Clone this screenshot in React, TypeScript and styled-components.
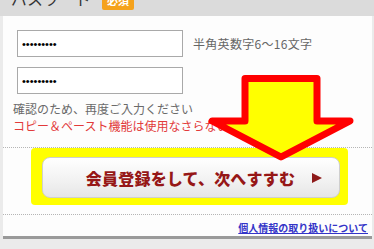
import React from "react";
import styled, { createGlobalStyle } from "styled-components";

const Global = createGlobalStyle`
  html, body { margin: 0; padding: 0; background: #ebebeb; }
  body { font-family: "Noto Sans CJK JP", "Liberation Sans", sans-serif; overflow: hidden; }
`;

const Page = styled.div`
  position: relative;
  width: 374px;
  height: 249px;
  overflow: hidden;
  background: #ebebeb;
`;

const Header = styled.div`
  height: 16px;
  overflow: hidden;
  background: #dbdbdb;
`;

const HeaderInner = styled.div`
  display: flex;
  align-items: flex-end;
  gap: 11px;
  margin-top: -10px;
  padding-left: 11px;
`;

const Title = styled.span`
  font-size: 16px;
  line-height: 16px;
  color: #333;
`;

const Badge = styled.span`
  display: inline-block;
  margin-bottom: -4px;
  padding: 0 5px;
  height: 20px;
  line-height: 20px;
  font-size: 11px;
  font-weight: bold;
  color: #fff;
  background: #f5a21c;
  border-radius: 2px;
`;

const Panel = styled.div`
  margin: 0 2px 0 3px;
  background: #fdfdfd;
  border-bottom: 3px solid #9a9a9a;
  display: flex;
  flex-direction: column;
`;

const FieldRow = styled.div<{ $top: number }>`
  display: flex;
  align-items: center;
  gap: 10px;
  margin-top: ${(p) => p.$top}px;
  padding-left: 14px;
`;

const PassInput = styled.input`
  box-sizing: border-box;
  width: 166px;
  height: 27px;
  margin: 0;
  padding: 0 4px;
  border: 1px solid #a9a9a9;
  border-radius: 0;
  background: #fff;
  font-family: "Liberation Sans", sans-serif;
  font-size: 11px;
  color: #000;
  outline: none;
`;

const Hint = styled.span`
  font-size: 12px;
  line-height: 16px;
  color: #666;
  letter-spacing: 0.3px;
`;

const Notes = styled.div`
  margin-top: 6px;
  padding-left: 10px;
  display: flex;
  flex-direction: column;
`;

const Note = styled.div<{ $red?: boolean }>`
  font-size: 12px;
  line-height: 17px;
  color: ${(p) => (p.$red ? "#e23a3a" : "#6a6a6a")};
  white-space: nowrap;
  letter-spacing: 0px;
`;

const Divider = styled.div<{ $top: number }>`
  margin-top: ${(p) => p.$top}px;
  border-top: 1px dotted #b5b5b5;
`;

const Highlight = styled.div`
  align-self: flex-start;
  margin-left: 28px;
  width: 317px;
  box-sizing: border-box;
  padding: 9px 8px 7px 11px;
  background: #ffff00;
  border-radius: 4px;
`;

const SubmitButton = styled.button`
  box-sizing: border-box;
  width: 298px;
  height: 41px;
  margin: 0;
  padding: 0 17px 0 0;
  display: grid;
  grid-template-columns: 1fr auto 1fr;
  align-items: center;
  border: 1px solid #cfcfcf;
  border-radius: 8px;
  background: linear-gradient(#ffffff, #f1f1f1 60%, #e6e6e6);
  box-shadow: inset 0 1px 0 #fff;
  cursor: pointer;
`;

const ButtonLabel = styled.span`
  grid-column: 2;
  font-family: "Noto Sans CJK JP", sans-serif;
  font-size: 16px;
  font-weight: 900;
  line-height: 20px;
  letter-spacing: 0.2px;
  color: #961717;
  margin-left: 16px;
`;

const ButtonArrow = styled.span`
  grid-column: 3;
  justify-self: end;
  width: 0;
  height: 0;
  border-top: 5px solid transparent;
  border-bottom: 5px solid transparent;
  border-left: 10px solid #8e1a1a;
`;

const LinkRow = styled.div`
  display: flex;
  justify-content: flex-end;
  margin-top: 6px;
  padding-right: 4px;
  height: 14px;
`;

const PolicyLink = styled.a`
  font-size: 10px;
  line-height: 14px;
  font-weight: bold;
  color: #3434c8;
  text-decoration: underline;
`;

const ArrowOverlay = styled.svg`
  position: absolute;
  left: 0;
  top: 0;
  pointer-events: none;
`;

export default function App() {
  return (
    <>
      <Global />
      <Page>
        <Header>
          <HeaderInner>
            <Title>パスワード</Title>
            <Badge>必須</Badge>
          </HeaderInner>
        </Header>
        <Panel>
          <FieldRow $top={14}>
            <PassInput type="password" defaultValue="abcdefghi" readOnly />
            <Hint>半角英数字6〜16文字</Hint>
          </FieldRow>
          <FieldRow $top={10}>
            <PassInput type="password" defaultValue="abcdefghi" readOnly />
          </FieldRow>
          <Notes>
            <Note>確認のため、再度ご入力ください</Note>
            <Note $red>コピー＆ペースト機能は使用なさらないでください</Note>
          </Notes>
          <Divider $top={13} />
          <Highlight>
            <SubmitButton type="button">
              <ButtonLabel>会員登録をして、次へすすむ</ButtonLabel>
              <ButtonArrow />
            </SubmitButton>
          </Highlight>
          <Divider $top={9} />
          <LinkRow>
            <PolicyLink href="#">個人情報の取り扱いについて</PolicyLink>
          </LinkRow>
          <div style={{ height: 1 }} />
        </Panel>
        <ArrowOverlay width="374" height="249" viewBox="0 0 374 249">
          <polygon
            points="245,78.5 317,78.5 317,121 350,121 281,157 212,121 245,121"
            fill="#ffff00"
            stroke="#ff0000"
            strokeWidth="7"
            strokeLinejoin="round"
          />
        </ArrowOverlay>
      </Page>
    </>
  );
}
